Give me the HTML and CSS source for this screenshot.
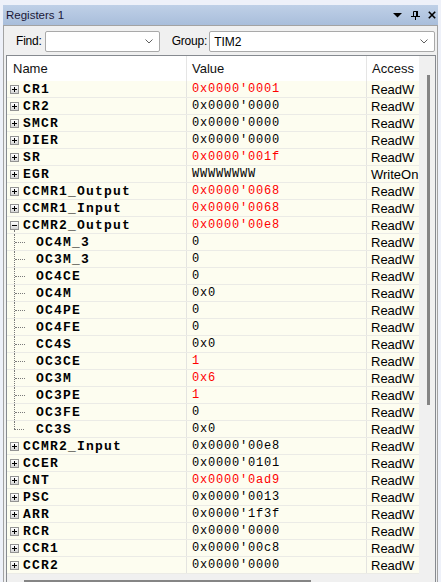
FILE: index.html
```html
<!DOCTYPE html>
<html>
<head>
<meta charset="utf-8">
<title>Registers 1</title>
<link rel="stylesheet" href="styles.css">
</head>
<body>
<div class="panel">
  <div class="titlebar">
    <span class="title">Registers 1</span>
    <span class="tools">
      <svg class="ic-menu" width="9" height="5" viewBox="0 0 9 5"><path d="M0 0H9L4.5 4.5Z" fill="#000"/></svg>
      <svg class="ic-pin" width="9" height="9" viewBox="0 0 9 9"><path d="M2.5 0.5H6.5V5.5H2.5Z" fill="none" stroke="#000"/><path d="M5 0H7V6H5Z" fill="#000"/><path d="M0 5H9V6H0Z" fill="#000"/><path d="M4 6H5V9H4Z" fill="#000"/></svg>
      <svg class="ic-close" width="8" height="8" viewBox="0 0 8 8"><path d="M0.8 0.8L7.2 7.2M7.2 0.8L0.8 7.2" stroke="#000" stroke-width="1.6" fill="none"/></svg>
    </span>
  </div>
  <div class="body">
    <div class="toolbar">
      <span class="lbl lbl-find">Find:</span>
      <div class="combo combo-find">
        <span class="ctext"></span>
        <svg width="8" height="5" viewBox="0 0 8 5"><path d="M0.5 0.5L4 4L7.5 0.5" fill="none" stroke="#606060"/></svg>
      </div>
      <span class="lbl lbl-group">Group:</span>
      <div class="combo combo-group">
        <span class="ctext">TIM2</span>
        <svg width="8" height="5" viewBox="0 0 8 5"><path d="M0.5 0.5L4 4L7.5 0.5" fill="none" stroke="#606060"/></svg>
      </div>
    </div>
    <div class="grid">
      <div class="list">
        <div class="hdr">
          <div class="h1">Name</div>
          <div class="h2">Value</div>
          <div class="h3">Access</div>
        </div>
        <div class="row"><div class="c1"><span class="exp plus"></span><span class="nm">CR1</span></div><div class="c2 red">0x0000'0001</div><div class="c3">ReadW</div></div>
        <div class="row"><div class="c1"><span class="exp plus"></span><span class="nm">CR2</span></div><div class="c2">0x0000'0000</div><div class="c3">ReadW</div></div>
        <div class="row"><div class="c1"><span class="exp plus"></span><span class="nm">SMCR</span></div><div class="c2">0x0000'0000</div><div class="c3">ReadW</div></div>
        <div class="row"><div class="c1"><span class="exp plus"></span><span class="nm">DIER</span></div><div class="c2">0x0000'0000</div><div class="c3">ReadW</div></div>
        <div class="row"><div class="c1"><span class="exp plus"></span><span class="nm">SR</span></div><div class="c2 red">0x0000'001f</div><div class="c3">ReadW</div></div>
        <div class="row"><div class="c1"><span class="exp plus"></span><span class="nm">EGR</span></div><div class="c2">WWWWWWWW</div><div class="c3">WriteOn</div></div>
        <div class="row"><div class="c1"><span class="exp plus"></span><span class="nm">CCMR1_Output</span></div><div class="c2 red">0x0000'0068</div><div class="c3">ReadW</div></div>
        <div class="row"><div class="c1"><span class="exp plus"></span><span class="nm">CCMR1_Input</span></div><div class="c2 red">0x0000'0068</div><div class="c3">ReadW</div></div>
        <div class="row"><div class="c1"><span class="exp minus"><span class="stem"></span></span><span class="nm">CCMR2_Output</span></div><div class="c2 red">0x0000'00e8</div><div class="c3">ReadW</div></div>
        <div class="row"><div class="c1"><span class="tree"></span><span class="nm">OC4M_3</span></div><div class="c2">0</div><div class="c3">ReadW</div></div>
        <div class="row"><div class="c1"><span class="tree"></span><span class="nm">OC3M_3</span></div><div class="c2">0</div><div class="c3">ReadW</div></div>
        <div class="row"><div class="c1"><span class="tree"></span><span class="nm">OC4CE</span></div><div class="c2">0</div><div class="c3">ReadW</div></div>
        <div class="row"><div class="c1"><span class="tree"></span><span class="nm">OC4M</span></div><div class="c2">0x0</div><div class="c3">ReadW</div></div>
        <div class="row"><div class="c1"><span class="tree"></span><span class="nm">OC4PE</span></div><div class="c2">0</div><div class="c3">ReadW</div></div>
        <div class="row"><div class="c1"><span class="tree"></span><span class="nm">OC4FE</span></div><div class="c2">0</div><div class="c3">ReadW</div></div>
        <div class="row"><div class="c1"><span class="tree"></span><span class="nm">CC4S</span></div><div class="c2">0x0</div><div class="c3">ReadW</div></div>
        <div class="row"><div class="c1"><span class="tree"></span><span class="nm">OC3CE</span></div><div class="c2 red">1</div><div class="c3">ReadW</div></div>
        <div class="row"><div class="c1"><span class="tree"></span><span class="nm">OC3M</span></div><div class="c2 red">0x6</div><div class="c3">ReadW</div></div>
        <div class="row"><div class="c1"><span class="tree"></span><span class="nm">OC3PE</span></div><div class="c2 red">1</div><div class="c3">ReadW</div></div>
        <div class="row"><div class="c1"><span class="tree"></span><span class="nm">OC3FE</span></div><div class="c2">0</div><div class="c3">ReadW</div></div>
        <div class="row"><div class="c1"><span class="tree last"></span><span class="nm">CC3S</span></div><div class="c2">0x0</div><div class="c3">ReadW</div></div>
        <div class="row"><div class="c1"><span class="exp plus"></span><span class="nm">CCMR2_Input</span></div><div class="c2">0x0000'00e8</div><div class="c3">ReadW</div></div>
        <div class="row"><div class="c1"><span class="exp plus"></span><span class="nm">CCER</span></div><div class="c2">0x0000'0101</div><div class="c3">ReadW</div></div>
        <div class="row"><div class="c1"><span class="exp plus"></span><span class="nm">CNT</span></div><div class="c2 red">0x0000'0ad9</div><div class="c3">ReadW</div></div>
        <div class="row"><div class="c1"><span class="exp plus"></span><span class="nm">PSC</span></div><div class="c2">0x0000'0013</div><div class="c3">ReadW</div></div>
        <div class="row"><div class="c1"><span class="exp plus"></span><span class="nm">ARR</span></div><div class="c2">0x0000'1f3f</div><div class="c3">ReadW</div></div>
        <div class="row"><div class="c1"><span class="exp plus"></span><span class="nm">RCR</span></div><div class="c2">0x0000'0000</div><div class="c3">ReadW</div></div>
        <div class="row"><div class="c1"><span class="exp plus"></span><span class="nm">CCR1</span></div><div class="c2">0x0000'00c8</div><div class="c3">ReadW</div></div>
        <div class="row"><div class="c1"><span class="exp plus"></span><span class="nm">CCR2</span></div><div class="c2">0x0000'0000</div><div class="c3">ReadW</div></div>
        <div class="hscroll"><div class="hthumb"></div></div>
      </div>
      <div class="vscroll"><div class="vthumb"></div></div>
    </div>
  </div>
</div>
</body>
</html>
```

FILE: styles.css
```css
* { box-sizing: border-box; }
html, body { margin: 0; }
body {
  width: 441px;
  height: 582px;
  overflow: hidden;
  background: #eef1f9;
  padding: 5px 3px 0 3px;
  font-family: "Liberation Sans", Arial, sans-serif;
}
.panel { width: 435px; }

.titlebar {
  height: 20px;
  display: flex;
  align-items: center;
  justify-content: space-between;
  background: linear-gradient(#bfd0e7, #a9bedb);
  padding: 0 2px 0 3px;
}
.title { font-size: 11.5px; color: #1a1838; }
.tools { display: flex; align-items: center; }
.ic-menu { margin-right: 9px; margin-top: 1px; }
.ic-pin { margin-right: 8px; }

.body {
  border: 1px solid #a3a3a3;
  border-bottom: none;
  background: #f0f0f0;
  height: 557px;
}
.toolbar {
  height: 29px;
  display: flex;
  align-items: flex-start;
  padding: 5px 0 0 12px;
}
.lbl {
  font-size: 12px;
  line-height: 21px;
  color: #000;
  letter-spacing: -0.2px;
}
.lbl-find { margin-right: 3px; }
.lbl-group { margin-left: 12px; margin-right: 2px; }
.combo {
  height: 21px;
  background: #fff;
  border: 1px solid #a9a9a9;
  border-radius: 2px;
  display: flex;
  align-items: center;
  justify-content: space-between;
  padding: 0 6px 0 4px;
}
.combo-find { width: 115px; }
.combo-group { width: 226px; }
.ctext { font-size: 12px; color: #000; }

.grid {
  margin: 0 1px 0 2px;
  border: 1px solid #868a90;
  border-bottom: none;
  display: flex;
  height: 527px;
  overflow: hidden;
}
.list {
  flex: none;
  width: 412px;
  display: flex;
  flex-direction: column;
  background: #f0f0f0;
}
.hdr {
  flex: none;
  height: 25px;
  display: grid;
  grid-template-columns: 180px 180px 52px;
  background: #fff;
  font-size: 13px;
  color: #111;
}
.hdr > div {
  display: flex;
  align-items: center;
  white-space: nowrap;
  overflow: hidden;
}
.h1 { padding-left: 6px; border-right: 1px solid #e5e5e5; }
.h2 { padding-left: 5px; border-right: 1px solid #e5e5e5; }
.h3 { padding-left: 5px; }

.row {
  flex: none;
  height: 17px;
  display: grid;
  grid-template-columns: 180px 180px 52px;
  background: #fdfdf0;
  border-bottom: 1px solid #ebebe6;
}
.row > div {
  display: flex;
  align-items: center;
  white-space: nowrap;
  overflow: hidden;
}
.c1 { border-right: 1px solid #e4e4e0; }
.c2 {
  border-right: 1px solid #e4e4e0;
  padding-left: 5px;
  font-family: "Liberation Mono", "Courier New", monospace;
  font-size: 12px;
  letter-spacing: 0.8px;
  color: #000;
}
.c2.red { color: #f00; }
.c3 {
  padding-left: 4px;
  font-size: 13px;
  color: #000;
}
.nm {
  font-family: "Liberation Mono", "Courier New", monospace;
  font-weight: bold;
  font-size: 13px;
  letter-spacing: 1.2px;
  color: #000;
}

.exp {
  position: relative;
  flex: none;
  width: 9px;
  height: 9px;
  margin: 0 4px 0 3px;
  border: 1px solid #939393;
  background: linear-gradient(#ffffff, #d6d6d6);
}
.exp::before {
  content: "";
  position: absolute;
  left: 1px;
  top: 3px;
  width: 5px;
  height: 1px;
  background: #000;
}
.exp.plus::after {
  content: "";
  position: absolute;
  left: 3px;
  top: 1px;
  width: 1px;
  height: 5px;
  background: #000;
}
.exp .stem {
  position: absolute;
  left: 3px;
  top: 8px;
  height: 4px;
  border-left: 1px dotted #7a7a7a;
}

.tree {
  position: relative;
  flex: none;
  align-self: stretch;
  width: 11px;
  margin: 0 11px 0 7px;
  border-left: 1px dotted #7a7a7a;
}
.tree::after {
  content: "";
  position: absolute;
  left: 0;
  top: 8px;
  width: 10px;
  border-top: 1px dotted #7a7a7a;
}
.tree.last { border-left: none; }
.tree.last::before {
  content: "";
  position: absolute;
  left: 0;
  top: 0;
  height: 8px;
  border-left: 1px dotted #7a7a7a;
}

.hscroll {
  flex: none;
  height: 20px;
  padding: 6px 0 0 17px;
}
.hthumb {
  width: 287px;
  height: 3px;
  background: #858585;
}

.vscroll {
  flex: 1;
  background: #f0f0f0;
  padding: 19px 0 0 8px;
}
.vthumb {
  width: 3px;
  height: 330px;
  background: #858585;
}
```
